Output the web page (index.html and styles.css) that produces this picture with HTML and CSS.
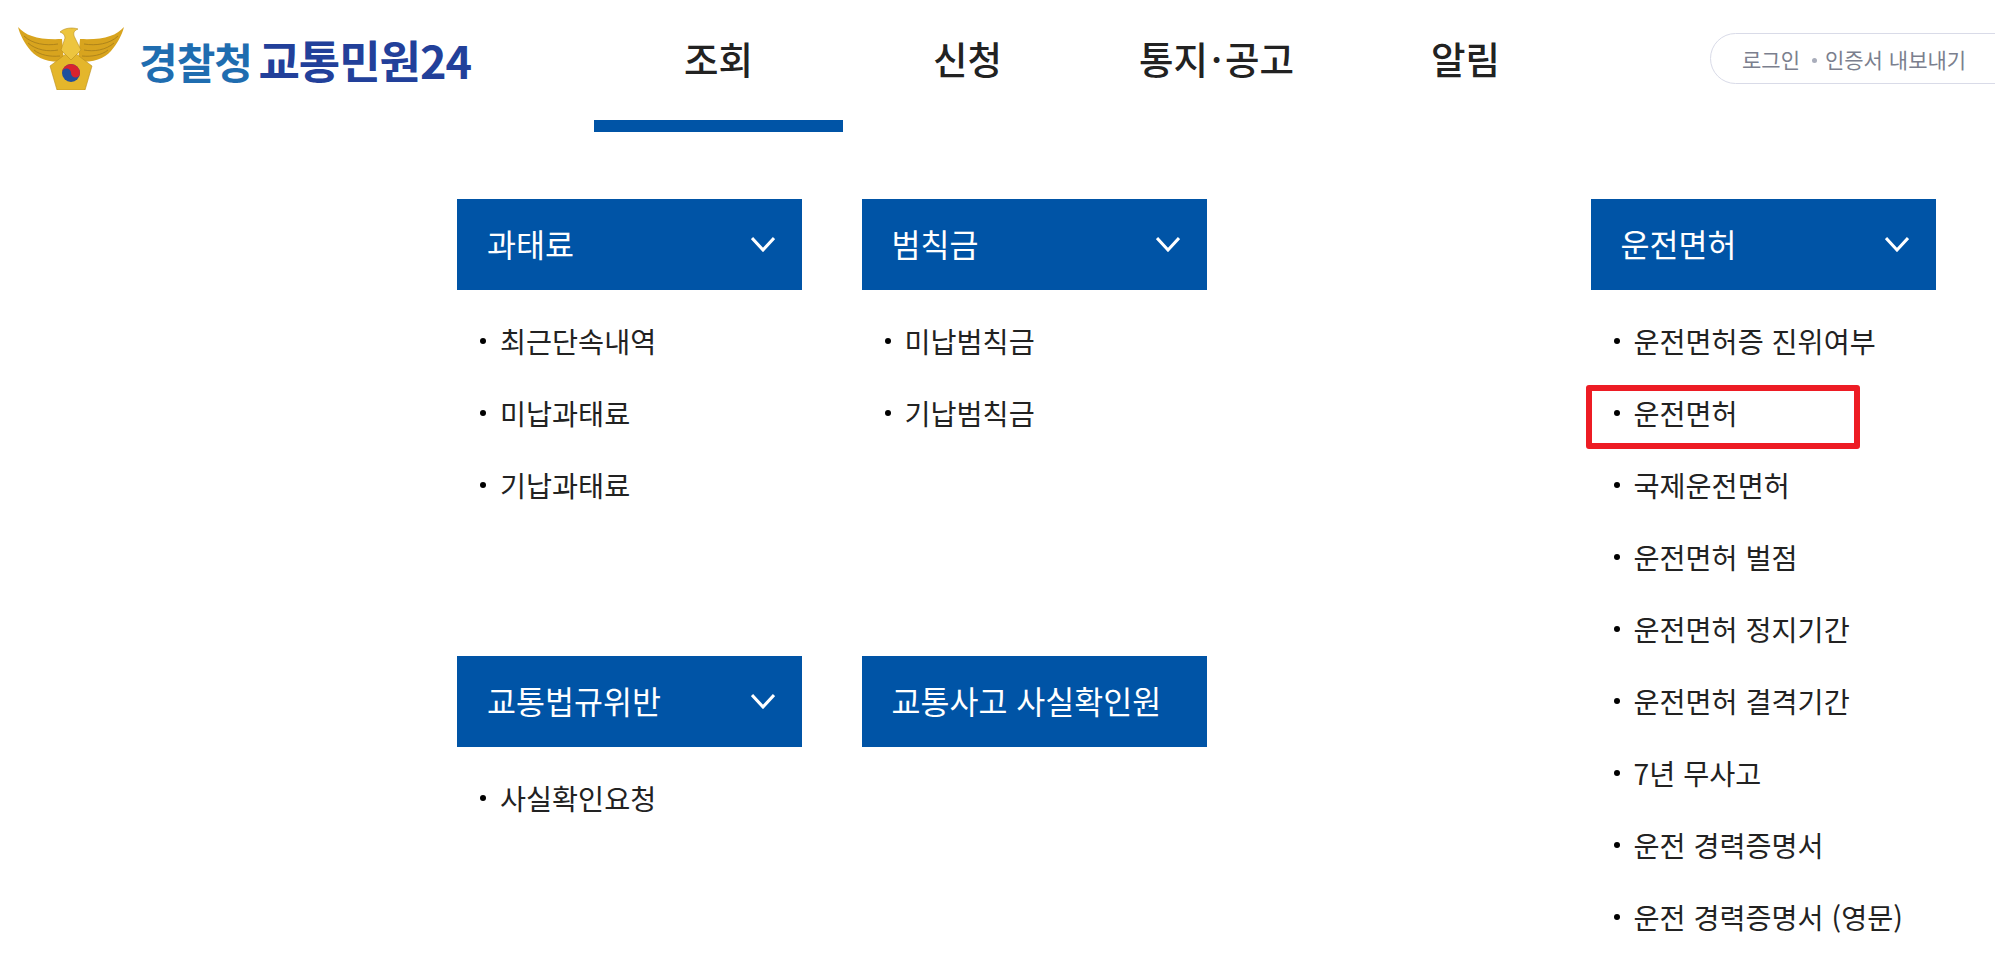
FILE: index.html
```html
<!DOCTYPE html>
<html lang="ko">
<head>
    <meta charset="UTF-8">
    <meta name="viewport" content="width=device-width, initial-scale=1.0">
    <title>경찰청 교통민원24</title>
    <link rel="stylesheet" href="styles.css">
</head>
<body>
    <div class="header">
        <a class="logo" href="#">
            <svg class="emblem" viewBox="0 0 106 64" aria-hidden="true">
                <path fill="#d8a41e" d="M0 1 C8 10 20 14 44 13 L46 36 C30 36 20 33 13 25 C7 18 2 9 0 1 Z"/>
                <path fill="#d8a41e" d="M106 1 C98 10 86 14 62 13 L60 36 C76 36 86 33 93 25 C99 18 104 9 106 1 Z"/>
                <path fill="none" stroke="#a9801b" stroke-width="0.9" d="M6 10 C14 18 28 20 40 18 M10 17 C18 24 30 26 40 24 M16 24 C22 29 32 31 42 30 M100 10 C92 18 78 20 66 18 M96 17 C88 24 76 26 66 24 M90 24 C84 29 74 31 64 30"/>
                <path fill="#e4b62b" stroke="#b98d1c" stroke-width="0.6" d="M53 24 L74 40 L67 64 L39 64 L32 40 Z"/>
                <path fill="#edc53f" stroke="#b98d1c" stroke-width="0.6" d="M42 6 C46 2 54 1 60 3 C55 5 55 8 57 12 L63 24 L53 34 L43 24 L47 12 C47 9 45 7 42 6 Z"/>
                <circle cx="53" cy="47" r="9" fill="#1f4f9c"/>
                <path fill="#d8232f" d="M44 47 A9 9 0 0 1 62 47 A4.5 4.5 0 0 1 53 47 A4.5 4.5 0 0 0 44 47 Z"/>
            </svg>
            <span class="logoText"><span class="logoPolice">경찰청</span> <span class="logoName">교통민원24</span></span>
        </a>
        <ul class="nav">
            <li class="active">조회</li>
            <li>신청</li>
            <li>통지<span class="navDot">·</span>공고</li>
            <li>알림</li>
        </ul>
        <div class="loginBox">
            <span>로그인</span>
            <span class="loginDot">인증서 내보내기</span>
        </div>
    </div>

    <div class="menuGrid">
        <div class="menuBox">
            <h3 class="menuTitle">과태료
                <svg class="arrow" viewBox="0 0 24 15"><path d="M1 1 L12 13 L23 1"/></svg>
            </h3>
            <ul class="menuList">
                <li>최근단속내역</li>
                <li>미납과태료</li>
                <li>기납과태료</li>
            </ul>
        </div>
        <div class="menuBox">
            <h3 class="menuTitle">범칙금
                <svg class="arrow" viewBox="0 0 24 15"><path d="M1 1 L12 13 L23 1"/></svg>
            </h3>
            <ul class="menuList">
                <li>미납범칙금</li>
                <li>기납범칙금</li>
            </ul>
        </div>
        <div class="menuBox licence">
            <h3 class="menuTitle">운전면허
                <svg class="arrow" viewBox="0 0 24 15"><path d="M1 1 L12 13 L23 1"/></svg>
            </h3>
            <ul class="menuList">
                <li>운전면허증 진위여부</li>
                <li class="marked">운전면허</li>
                <li>국제운전면허</li>
                <li>운전면허 벌점</li>
                <li>운전면허 정지기간</li>
                <li>운전면허 결격기간</li>
                <li>7년 무사고</li>
                <li>운전 경력증명서</li>
                <li>운전 경력증명서 (영문)</li>
            </ul>
        </div>
        <div class="menuBox">
            <h3 class="menuTitle">교통법규위반
                <svg class="arrow" viewBox="0 0 24 15"><path d="M1 1 L12 13 L23 1"/></svg>
            </h3>
            <ul class="menuList">
                <li>사실확인요청</li>
            </ul>
        </div>
        <div class="menuBox">
            <h3 class="menuTitle">교통사고 사실확인원</h3>
        </div>
    </div>
</body>
</html>
```

FILE: styles.css
```css
* {
    padding: 0;
    margin: 0;
    list-style: none;
    box-sizing: border-box;
}

html, body {
    height: 100%;
    overflow: hidden;
}

body {
    background-color: #fff;
    color: #222;
    font-family: "Noto Sans CJK KR", "Noto Sans", sans-serif;
}

a {
    color: inherit;
    text-decoration: none;
}

.header {
    display: flex;
    align-items: flex-start;
    height: 132px;
}

.logo {
    display: flex;
    align-items: flex-start;
    width: 594px;
    flex-shrink: 0;
    padding: 26px 0 0 18px;
}

.emblem {
    width: 106px;
    height: 64px;
    flex-shrink: 0;
}

.logoText {
    margin: 9px 0 0 15px;
    line-height: 50px;
    font-weight: 700;
    letter-spacing: -1px;
    white-space: nowrap;
}

.logoPolice {
    color: #1f6db0;
    font-size: 42px;
}

.logoName {
    margin-left: 3px;
    color: #22409a;
    font-size: 45px;
}

.nav {
    display: flex;
}

.nav li {
    width: 249px;
    height: 132px;
    padding-top: 31px;
    font-size: 37.5px;
    line-height: 54px;
    font-weight: 500;
    text-align: center;
    white-space: nowrap;
}

.nav .active {
    border-bottom: 12px solid #0054a6;
}

.navDot {
    padding: 0 3px;
}

.loginBox {
    display: flex;
    align-items: center;
    gap: 25px;
    flex-shrink: 0;
    width: 330px;
    height: 51px;
    margin: 33px 0 0 120px;
    padding-left: 31px;
    border: 1px solid #d9dbe8;
    border-radius: 26px;
    color: #7b7f8e;
    font-size: 21px;
    white-space: nowrap;
}

.loginDot {
    position: relative;
}

.loginDot::before {
    content: "";
    position: absolute;
    left: -13px;
    top: 14px;
    width: 5px;
    height: 5px;
    border-radius: 50%;
    background-color: #a9adbb;
}

.menuGrid {
    display: grid;
    grid-template-columns: 404.5px 729px 345px;
    grid-template-rows: 457px auto;
    margin: 67px 0 0 457px;
}

.licence {
    grid-column: 3;
    grid-row: 1 / span 2;
}

.menuBox {
    width: 345px;
}

.menuTitle {
    display: flex;
    align-items: center;
    justify-content: space-between;
    height: 91px;
    padding: 0 27px 4px 30px;
    background-color: #0054a6;
    color: #fff;
    font-size: 31.5px;
    font-weight: 400;
    white-space: nowrap;
}

.arrow {
    width: 24px;
    height: 15px;
    margin-top: 4px;
    fill: none;
    stroke: #fff;
    stroke-width: 3;
}

.menuList {
    padding-top: 14px;
}

.menuList li {
    position: relative;
    display: flex;
    align-items: center;
    height: 72px;
    padding-left: 43px;
    font-size: 28.3px;
    white-space: nowrap;
}

.menuList li::before {
    content: "";
    position: absolute;
    left: 23px;
    top: 34px;
    width: 6px;
    height: 6px;
    border-radius: 50%;
    background-color: #000;
}

/* 빨간 표시 */
.marked::after {
    content: "";
    box-sizing: border-box;
    position: absolute;
    left: -5px;
    top: 9px;
    width: 274px;
    height: 64px;
    border: 6px solid #ed1c24;
    border-radius: 3px;
}
```
